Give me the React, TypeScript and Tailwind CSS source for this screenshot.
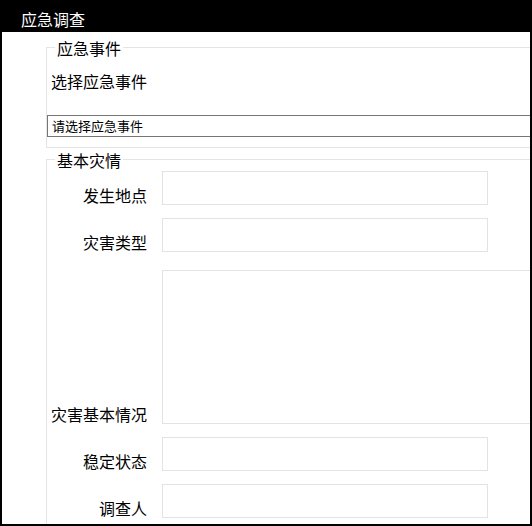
import React from 'react';

const font = { fontFamily: '"Noto Sans CJK SC", "Microsoft YaHei", sans-serif' };

// one labelled field in the 基本灾情 group
function Row({ label, tall, first }: { label: string; tall?: boolean; first?: boolean }) {
  const gap = first ? 'mt-0' : tall ? 'mt-[18px]' : 'mt-[13px]';
  return (
    <div className={`flex items-end ${gap}`}>
      <div className="w-[100px] shrink-0 text-right text-[16px] leading-[16px] pb-[2px] text-black">{label}</div>
      {tall ? (
        <textarea className="ml-[15px] w-[520px] h-[154px] shrink-0 border border-[#e3e3e3] bg-white resize-none outline-none" />
      ) : (
        <input className="ml-[15px] w-[326px] h-[34px] shrink-0 border border-[#e3e3e3] bg-white outline-none" />
      )}
    </div>
  );
}

export default function App() {
  return (
    <div className="w-[532px] h-[526px] bg-black px-[2px] pb-[2px] flex flex-col" style={font}>
      <div className="h-[32px] shrink-0 pl-[19px] pt-[11px] text-[16px] leading-[16px] text-white">应急调查</div>
      <div className="flex-1 bg-white overflow-hidden pl-[44px]">
        <fieldset className="mt-[4px] w-[620px] border border-[#e5e5e5] pb-[10px]">
          <legend className="ml-[8px] px-[2px] pt-[2px] text-[16px] leading-[20px] text-black">应急事件</legend>
          <div className="mt-[15px] pl-[4px] text-[16px] leading-[16px] text-black">选择应急事件</div>
          <select className="mt-[26px] block w-[640px] h-[22px] border border-[#767676] bg-white pl-[4px] text-[13px] leading-[20px] text-black appearance-none outline-none">
            <option>请选择应急事件</option>
          </select>
        </fieldset>
        <fieldset className="w-[620px] border border-[#e5e5e5] pt-[1px] pb-[20px]">
          <legend className="ml-[8px] px-[2px] pt-[2px] text-[16px] leading-[20px] text-black">基本灾情</legend>
          <Row label="发生地点" first />
          <Row label="灾害类型" />
          <Row label="灾害基本情况" tall />
          <Row label="稳定状态" />
          <Row label="调查人" />
        </fieldset>
      </div>
    </div>
  );
}
